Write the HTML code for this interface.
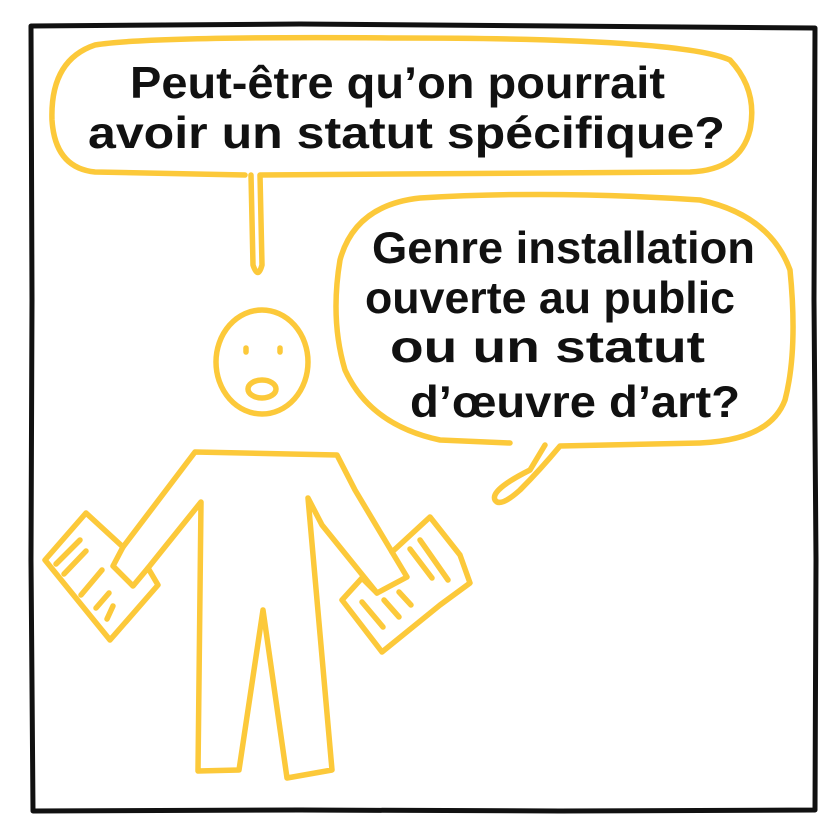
<!DOCTYPE html>
<html><head><meta charset="utf-8"><style>html,body{margin:0;padding:0;background:#fff}svg{display:block}</style></head>
<body>
<svg width="832" height="831" viewBox="0 0 832 831" xmlns="http://www.w3.org/2000/svg">
<rect width="832" height="831" fill="#fff"/>
<path d="M31 26 L300 24 L560 26 L815 28 L814 300 L816 560 L815 810 L560 811 L300 810 L33 811 L31 560 L32 300 Z" fill="none" stroke="#111" stroke-width="5" stroke-linejoin="round"/>
<g fill="none" stroke="#fcc93a" stroke-width="5.5" stroke-linecap="round" stroke-linejoin="round">
<path d="M245 175 L95 172 Q55 168 52 120 Q50 60 95 45 Q150 36 400 38 Q680 38 730 60 Q758 90 750 130 Q740 170 690 172 L260 175 L262 265 Q258 280 253 265 L251 175"/>
<path d="M510 443 L440 440 Q370 425 345 370 Q330 320 340 260 Q355 205 420 198 Q550 190 700 200 Q770 215 790 270 Q798 350 785 400 Q770 440 700 443 L560 446 Q540 470 520 490 Q500 508 495 500 Q490 490 530 470 L545 445"/>
<ellipse cx="262" cy="362" rx="46" ry="52"/>
<path d="M246 348 L246 352 M280 348 L280 352"/>
<ellipse cx="262" cy="389" rx="14" ry="9"/>
<path d="M195 452 L337 455 L355 490 L392 552 L407 577 L377 593 L322 525 L308 498 L332 770 L287 778 L263 610 L239 770 L198 771 L201 502 L148 568 L133 586 L113 566 L123 547 L195 452"/>
<path d="M123 547 L86 513 L45 560 L110 640 L158 585 L148 568"/>
<path d="M56 564 L80 540 M64 574 L86 551 M81 595 L102 570 M96 608 L109 593 M107 619 L113 606"/>
<path d="M392 552 L430 517 L460 555 L470 583 L440 605 L382 652 L342 600 L362 578 L377 593"/>
<path d="M362 602 L383 627 M384 600 L399 617 M399 592 L411 605 M410 549 L432 578 M420 540 L448 580"/>
</g>
<g font-family="'Liberation Sans',sans-serif" font-size="34" font-weight="bold" fill="#111">
<text transform="translate(130 98) scale(1 1.3)" textLength="535" lengthAdjust="spacingAndGlyphs">Peut-être  qu’on  pourrait</text>
<text transform="translate(88 148) scale(1 1.3)" textLength="637" lengthAdjust="spacingAndGlyphs">avoir   un   statut  spécifique?</text>
<text transform="translate(372 263) scale(1 1.3)" textLength="383" lengthAdjust="spacingAndGlyphs">Genre  installation</text>
<text transform="translate(365 313) scale(1 1.3)" textLength="370" lengthAdjust="spacingAndGlyphs">ouverte  au  public</text>
<text transform="translate(390 362) scale(1 1.3)" textLength="315" lengthAdjust="spacingAndGlyphs">ou   un   statut</text>
<text transform="translate(410 417) scale(1 1.3)" textLength="330" lengthAdjust="spacingAndGlyphs">d’œuvre  d’art?</text>
</g>
</svg>
</body></html>
